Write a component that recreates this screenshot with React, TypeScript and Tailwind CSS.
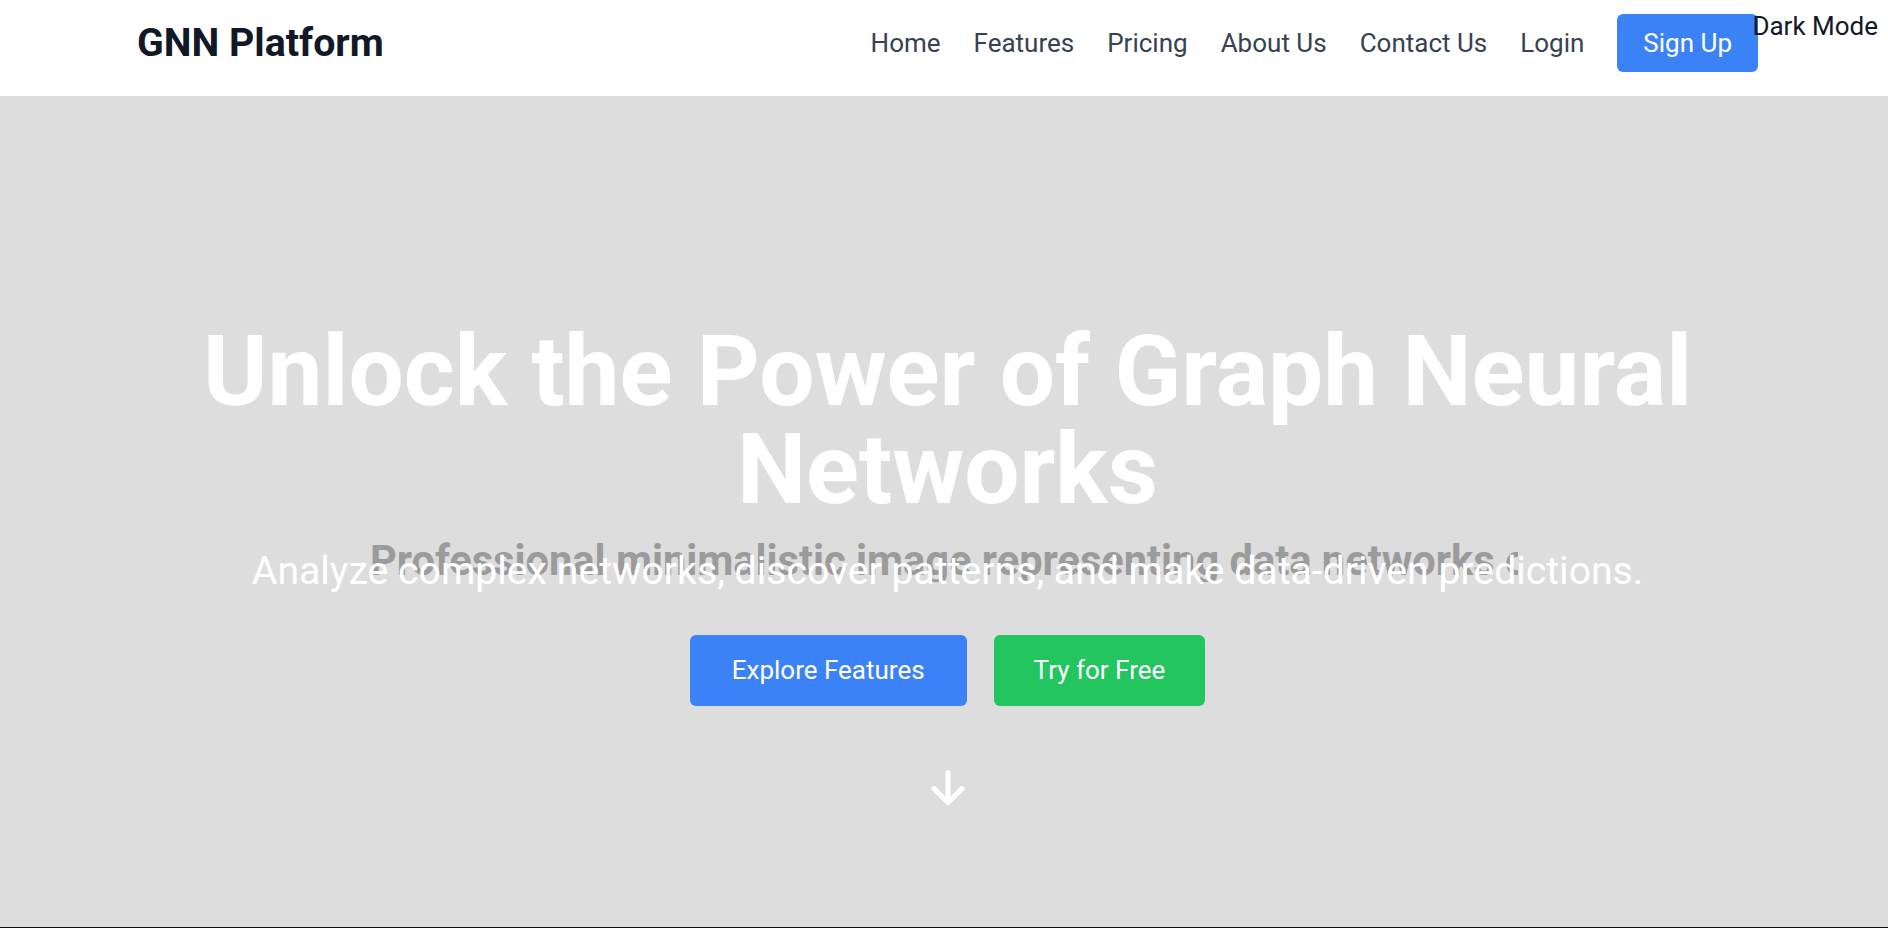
import React from "react";

export default function App() {
  const font = { fontFamily: "Roboto, 'Liberation Sans', sans-serif" };
  return (
    <div className="w-full min-h-screen bg-white" style={font}>
      {/* Header */}
      <header className="relative h-[96px] bg-white pt-[14px] pl-[137px] pr-[130px]">
        <div className="flex h-[58px] items-center justify-between">
          <div className="text-[39.3px] font-bold leading-[48px] text-[#111827]">GNN Platform</div>
          <nav className="flex items-center gap-[33px] text-[26px] leading-[38.4px] text-[#374151]">
            <a className="cursor-pointer">Home</a>
            <a className="cursor-pointer">Features</a>
            <a className="cursor-pointer">Pricing</a>
            <a className="cursor-pointer">About Us</a>
            <a className="cursor-pointer">Contact Us</a>
            <a className="cursor-pointer">Login</a>
            <button className="flex h-[58px] items-center rounded-[6px] bg-[#3b82f6] px-[26px] text-[26px] leading-[38.4px] text-white">
              Sign Up
            </button>
          </nav>
        </div>
        <button className="absolute right-[10px] top-[7px] text-[26px] leading-[38.4px] text-[#111827]">
          Dark Mode
        </button>
      </header>

      {/* Hero */}
      <section className="relative h-[831px] overflow-hidden bg-[#dddddd]">
        <div className="absolute left-[370px] top-[444px] w-[1148px] overflow-hidden whitespace-nowrap text-[41.6px] font-bold leading-[41.6px] text-[#9b9b9b]">
          Professional minimalistic image representing data networks o
        </div>
        <div className="relative z-10 flex flex-col items-center pl-[7px] pt-[227px]">
          <h1 className="w-full px-[40px] text-center text-[98px] font-bold leading-[98px] text-white">
            Unlock the Power of Graph Neural Networks
          </h1>
          <p className="mt-[27px] text-center text-[39.2px] leading-[51.2px] text-white">
            Analyze complex networks, discover patterns, and make data-driven predictions.
          </p>
          <div className="mt-[38px] flex gap-[27px]">
            <button className="rounded-[6px] bg-[#3b82f6] px-[42px] py-[16px] text-[26px] leading-[38.4px] text-white">
              Explore Features
            </button>
            <button className="rounded-[6px] bg-[#22c55e] px-[40px] py-[16px] text-[26px] leading-[38.4px] text-white">
              Try for Free
            </button>
          </div>
        </div>
        <div className="absolute left-[931px] top-[674px] z-10">
          <svg width="34" height="36" viewBox="0 0 34 36" fill="none" stroke="white" strokeWidth="5" strokeLinecap="round" strokeLinejoin="round">
            <path d="M17 2.5V32.5" />
            <path d="M3 18.5L17 32.5L31 18.5" />
          </svg>
        </div>
      </section>
      <section className="h-[300px] bg-[#111111]" />
    </div>
  );
}
